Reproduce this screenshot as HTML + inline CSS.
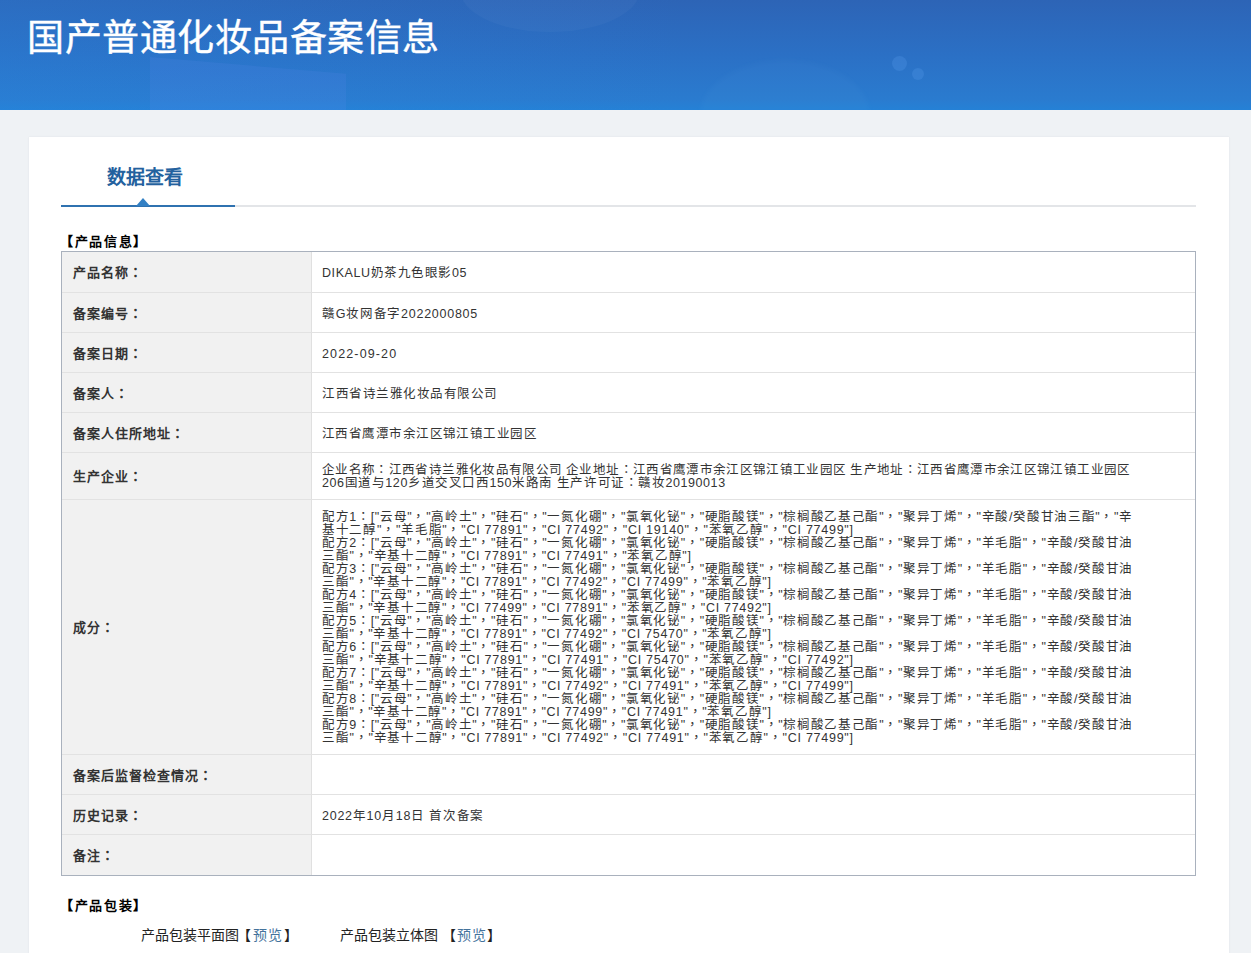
<!DOCTYPE html><html lang="zh-CN"><head><meta charset="utf-8"><style>
*{box-sizing:border-box}
html,body{margin:0;padding:0}
body{width:1251px;height:953px;overflow:hidden;background:#eff2f5;font-family:"Liberation Sans",sans-serif;color:#333;position:relative}
div{position:absolute;white-space:nowrap}
.hdr{left:0;top:0;width:1251px;height:110px;background:linear-gradient(180deg,#2d64b6 0%,#2b70c5 50%,#2a7bcf 90%,#2581d6 100%);overflow:hidden}
.t{color:#fff;font-size:37px;line-height:44px;-webkit-text-stroke:0.4px #fff}
.card{left:29px;top:137px;width:1200px;height:830px;background:#fff;box-shadow:0 0 2px rgba(0,20,60,0.07)}
.tab{font-size:19px;line-height:26px;font-weight:bold;color:#23619e}
.sec{font-size:13px;letter-spacing:1.7px;line-height:16px;font-weight:bold;color:#000}
.box{left:61px;top:251px;width:1135px;height:625px;border:1px solid #a9b1bd;background:#fff}
.lab{left:62px;width:249px;background:#f1f1f1}
.vl{left:311px;top:252px;width:1px;height:623px;background:#e0e0e0}
.hl{left:62px;width:1133px;height:1px;background:#e2e2e2}
.lt{left:73px;font-size:13px;font-weight:bold;color:#333;line-height:20px}
.vt{left:322px;font-size:12.5px;color:#333;line-height:20px}
.il{left:322px;font-size:12.5px;color:#333;line-height:13px}
.pk{font-size:14px;line-height:16px;color:#222}
.pk span{color:#44739c}
</style></head><body>
<div class="hdr"><div style="left:0;top:0;width:1251px;height:110px;background:linear-gradient(90deg,rgba(40,135,225,0.25),rgba(40,135,225,0) 55%)"></div><div style="left:150px;top:57px;width:196px;height:60px;background:rgba(130,150,255,0.1);clip-path:polygon(0 0,100% 28%,100% 100%,0 100%)"></div><div style="left:460px;top:-52px;width:180px;height:84px;border-radius:50%;background:rgba(255,255,255,0.03)"></div><div style="left:700px;top:60px;width:170px;height:110px;border-radius:50%;background:rgba(120,200,255,0.04);filter:blur(2px)"></div><div style="left:892px;top:56px;width:15px;height:15px;border-radius:50%;background:rgba(90,160,240,0.25);filter:blur(0.6px)"></div><div style="left:912px;top:68px;width:12px;height:12px;border-radius:50%;background:rgba(90,160,240,0.25);filter:blur(0.6px)"></div><div class="t" style="left:27px;top:17px;letter-spacing:0.5px">国产普通化妆品备案信息</div></div>
<div class="card"></div>
<div class="tab" style="left:107px;top:165px;letter-spacing:0px">数据查看</div>
<div style="left:61px;top:205px;width:1135px;height:2px;background:#e3e5e8"></div>
<div style="left:61px;top:205px;width:174px;height:2px;background:#2f72b0"></div>
<div style="left:136px;top:198px;width:0;height:0;border-left:7px solid transparent;border-right:7px solid transparent;border-bottom:8px solid #3380c4"></div>
<div class="sec" style="left:60px;top:234px">【产品信息】</div>
<div class="box"></div>
<div class="lab" style="top:252px;height:40px"></div>
<div class="lab" style="top:293px;height:39px"></div>
<div class="lab" style="top:333px;height:39px"></div>
<div class="lab" style="top:373px;height:39px"></div>
<div class="lab" style="top:413px;height:39px"></div>
<div class="lab" style="top:453px;height:46px"></div>
<div class="lab" style="top:500px;height:254px"></div>
<div class="lab" style="top:755px;height:39px"></div>
<div class="lab" style="top:795px;height:39px"></div>
<div class="lab" style="top:835px;height:40px"></div>
<div class="vl"></div>
<div class="hl" style="top:292px"></div>
<div class="hl" style="top:332px"></div>
<div class="hl" style="top:372px"></div>
<div class="hl" style="top:412px"></div>
<div class="hl" style="top:452px"></div>
<div class="hl" style="top:499px"></div>
<div class="hl" style="top:754px"></div>
<div class="hl" style="top:794px"></div>
<div class="hl" style="top:834px"></div>
<div id="lab0" class="lt" style="top:263.0px;letter-spacing:1px">产品名称<span lang="zh-TW">：</span></div>
<div id="v0" class="vt" style="top:263.0px;letter-spacing:0.569px">DIKALU奶茶九色眼影05</div>
<div id="lab1" class="lt" style="top:303.5px;letter-spacing:1px">备案编号<span lang="zh-TW">：</span></div>
<div id="v1" class="vt" style="top:303.5px;letter-spacing:0.733px">赣G妆网备字2022000805</div>
<div id="lab2" class="lt" style="top:343.5px;letter-spacing:1px">备案日期<span lang="zh-TW">：</span></div>
<div id="v2" class="vt" style="top:343.5px;letter-spacing:1.134px">2022-09-20</div>
<div id="lab3" class="lt" style="top:383.5px;letter-spacing:1px">备案人<span lang="zh-TW">：</span></div>
<div id="v3" class="vt" style="top:383.5px;letter-spacing:0.508px">江西省诗兰雅化妆品有限公司</div>
<div id="lab4" class="lt" style="top:423.5px;letter-spacing:1px">备案人住所地址<span lang="zh-TW">：</span></div>
<div id="v4" class="vt" style="top:423.5px;letter-spacing:0.447px">江西省鹰潭市余江区锦江镇工业园区</div>
<div id="lab5" class="lt" style="top:467.0px;letter-spacing:1px">生产企业<span lang="zh-TW">：</span></div>
<div id="p0" class="il" style="top:464px;letter-spacing:0.348px">企业名称<span lang="zh-TW">：</span>江西省诗兰雅化妆品有限公司 企业地址<span lang="zh-TW">：</span>江西省鹰潭市余江区锦江镇工业园区 生产地址<span lang="zh-TW">：</span>江西省鹰潭市余江区锦江镇工业园区</div>
<div id="p1" class="il" style="top:477px;letter-spacing:0.579px">206国道与120乡道交叉口西150米路南 生产许可证<span lang="zh-TW">：</span>赣妆20190013</div>
<div id="lab6" class="lt" style="top:618.0px;letter-spacing:1px">成分<span lang="zh-TW">：</span></div>
<div id="lab7" class="lt" style="top:765.5px;letter-spacing:1px">备案后监督检查情况<span lang="zh-TW">：</span></div>
<div id="lab8" class="lt" style="top:805.5px;letter-spacing:1px">历史记录<span lang="zh-TW">：</span></div>
<div id="v8" class="vt" style="top:805.5px;letter-spacing:0.747px">2022年10月18日 首次备案</div>
<div id="lab9" class="lt" style="top:846.0px;letter-spacing:1px">备注<span lang="zh-TW">：</span></div>
<div id="i0_0" class="il" style="top:511px;letter-spacing:0.678px">配方1<span lang="zh-TW">：</span>["云母"<span lang="zh-TW">，</span>"高岭土"<span lang="zh-TW">，</span>"硅石"<span lang="zh-TW">，</span>"一氮化硼"<span lang="zh-TW">，</span>"氯氧化铋"<span lang="zh-TW">，</span>"硬脂酸镁"<span lang="zh-TW">，</span>"棕榈酸乙基己酯"<span lang="zh-TW">，</span>"聚异丁烯"<span lang="zh-TW">，</span>"辛酸/癸酸甘油三酯"<span lang="zh-TW">，</span>"辛</div>
<div id="i0_1" class="il" style="top:524px;letter-spacing:0.738px">基十二醇"<span lang="zh-TW">，</span>"羊毛脂"<span lang="zh-TW">，</span>"CI 77891"<span lang="zh-TW">，</span>"CI 77492"<span lang="zh-TW">，</span>"CI 19140"<span lang="zh-TW">，</span>"苯氧乙醇"<span lang="zh-TW">，</span>"CI 77499"]</div>
<div id="i1_0" class="il" style="top:537px;letter-spacing:0.678px">配方2<span lang="zh-TW">：</span>["云母"<span lang="zh-TW">，</span>"高岭土"<span lang="zh-TW">，</span>"硅石"<span lang="zh-TW">，</span>"一氮化硼"<span lang="zh-TW">，</span>"氯氧化铋"<span lang="zh-TW">，</span>"硬脂酸镁"<span lang="zh-TW">，</span>"棕榈酸乙基己酯"<span lang="zh-TW">，</span>"聚异丁烯"<span lang="zh-TW">，</span>"羊毛脂"<span lang="zh-TW">，</span>"辛酸/癸酸甘油</div>
<div id="i1_1" class="il" style="top:550px;letter-spacing:0.725px">三酯"<span lang="zh-TW">，</span>"辛基十二醇"<span lang="zh-TW">，</span>"CI 77891"<span lang="zh-TW">，</span>"CI 77491"<span lang="zh-TW">，</span>"苯氧乙醇"]</div>
<div id="i2_0" class="il" style="top:563px;letter-spacing:0.678px">配方3<span lang="zh-TW">：</span>["云母"<span lang="zh-TW">，</span>"高岭土"<span lang="zh-TW">，</span>"硅石"<span lang="zh-TW">，</span>"一氮化硼"<span lang="zh-TW">，</span>"氯氧化铋"<span lang="zh-TW">，</span>"硬脂酸镁"<span lang="zh-TW">，</span>"棕榈酸乙基己酯"<span lang="zh-TW">，</span>"聚异丁烯"<span lang="zh-TW">，</span>"羊毛脂"<span lang="zh-TW">，</span>"辛酸/癸酸甘油</div>
<div id="i2_1" class="il" style="top:576px;letter-spacing:0.714px">三酯"<span lang="zh-TW">，</span>"辛基十二醇"<span lang="zh-TW">，</span>"CI 77891"<span lang="zh-TW">，</span>"CI 77492"<span lang="zh-TW">，</span>"CI 77499"<span lang="zh-TW">，</span>"苯氧乙醇"]</div>
<div id="i3_0" class="il" style="top:589px;letter-spacing:0.678px">配方4<span lang="zh-TW">：</span>["云母"<span lang="zh-TW">，</span>"高岭土"<span lang="zh-TW">，</span>"硅石"<span lang="zh-TW">，</span>"一氮化硼"<span lang="zh-TW">，</span>"氯氧化铋"<span lang="zh-TW">，</span>"硬脂酸镁"<span lang="zh-TW">，</span>"棕榈酸乙基己酯"<span lang="zh-TW">，</span>"聚异丁烯"<span lang="zh-TW">，</span>"羊毛脂"<span lang="zh-TW">，</span>"辛酸/癸酸甘油</div>
<div id="i3_1" class="il" style="top:602px;letter-spacing:0.714px">三酯"<span lang="zh-TW">，</span>"辛基十二醇"<span lang="zh-TW">，</span>"CI 77499"<span lang="zh-TW">，</span>"CI 77891"<span lang="zh-TW">，</span>"苯氧乙醇"<span lang="zh-TW">，</span>"CI 77492"]</div>
<div id="i4_0" class="il" style="top:615px;letter-spacing:0.678px">配方5<span lang="zh-TW">：</span>["云母"<span lang="zh-TW">，</span>"高岭土"<span lang="zh-TW">，</span>"硅石"<span lang="zh-TW">，</span>"一氮化硼"<span lang="zh-TW">，</span>"氯氧化铋"<span lang="zh-TW">，</span>"硬脂酸镁"<span lang="zh-TW">，</span>"棕榈酸乙基己酯"<span lang="zh-TW">，</span>"聚异丁烯"<span lang="zh-TW">，</span>"羊毛脂"<span lang="zh-TW">，</span>"辛酸/癸酸甘油</div>
<div id="i4_1" class="il" style="top:628px;letter-spacing:0.714px">三酯"<span lang="zh-TW">，</span>"辛基十二醇"<span lang="zh-TW">，</span>"CI 77891"<span lang="zh-TW">，</span>"CI 77492"<span lang="zh-TW">，</span>"CI 75470"<span lang="zh-TW">，</span>"苯氧乙醇"]</div>
<div id="i5_0" class="il" style="top:641px;letter-spacing:0.678px">配方6<span lang="zh-TW">：</span>["云母"<span lang="zh-TW">，</span>"高岭土"<span lang="zh-TW">，</span>"硅石"<span lang="zh-TW">，</span>"一氮化硼"<span lang="zh-TW">，</span>"氯氧化铋"<span lang="zh-TW">，</span>"硬脂酸镁"<span lang="zh-TW">，</span>"棕榈酸乙基己酯"<span lang="zh-TW">，</span>"聚异丁烯"<span lang="zh-TW">，</span>"羊毛脂"<span lang="zh-TW">，</span>"辛酸/癸酸甘油</div>
<div id="i5_1" class="il" style="top:654px;letter-spacing:0.738px">三酯"<span lang="zh-TW">，</span>"辛基十二醇"<span lang="zh-TW">，</span>"CI 77891"<span lang="zh-TW">，</span>"CI 77491"<span lang="zh-TW">，</span>"CI 75470"<span lang="zh-TW">，</span>"苯氧乙醇"<span lang="zh-TW">，</span>"CI 77492"]</div>
<div id="i6_0" class="il" style="top:667px;letter-spacing:0.678px">配方7<span lang="zh-TW">：</span>["云母"<span lang="zh-TW">，</span>"高岭土"<span lang="zh-TW">，</span>"硅石"<span lang="zh-TW">，</span>"一氮化硼"<span lang="zh-TW">，</span>"氯氧化铋"<span lang="zh-TW">，</span>"硬脂酸镁"<span lang="zh-TW">，</span>"棕榈酸乙基己酯"<span lang="zh-TW">，</span>"聚异丁烯"<span lang="zh-TW">，</span>"羊毛脂"<span lang="zh-TW">，</span>"辛酸/癸酸甘油</div>
<div id="i6_1" class="il" style="top:680px;letter-spacing:0.738px">三酯"<span lang="zh-TW">，</span>"辛基十二醇"<span lang="zh-TW">，</span>"CI 77891"<span lang="zh-TW">，</span>"CI 77492"<span lang="zh-TW">，</span>"CI 77491"<span lang="zh-TW">，</span>"苯氧乙醇"<span lang="zh-TW">，</span>"CI 77499"]</div>
<div id="i7_0" class="il" style="top:693px;letter-spacing:0.678px">配方8<span lang="zh-TW">：</span>["云母"<span lang="zh-TW">，</span>"高岭土"<span lang="zh-TW">，</span>"硅石"<span lang="zh-TW">，</span>"一氮化硼"<span lang="zh-TW">，</span>"氯氧化铋"<span lang="zh-TW">，</span>"硬脂酸镁"<span lang="zh-TW">，</span>"棕榈酸乙基己酯"<span lang="zh-TW">，</span>"聚异丁烯"<span lang="zh-TW">，</span>"羊毛脂"<span lang="zh-TW">，</span>"辛酸/癸酸甘油</div>
<div id="i7_1" class="il" style="top:706px;letter-spacing:0.714px">三酯"<span lang="zh-TW">，</span>"辛基十二醇"<span lang="zh-TW">，</span>"CI 77891"<span lang="zh-TW">，</span>"CI 77499"<span lang="zh-TW">，</span>"CI 77491"<span lang="zh-TW">，</span>"苯氧乙醇"]</div>
<div id="i8_0" class="il" style="top:719px;letter-spacing:0.678px">配方9<span lang="zh-TW">：</span>["云母"<span lang="zh-TW">，</span>"高岭土"<span lang="zh-TW">，</span>"硅石"<span lang="zh-TW">，</span>"一氮化硼"<span lang="zh-TW">，</span>"氯氧化铋"<span lang="zh-TW">，</span>"硬脂酸镁"<span lang="zh-TW">，</span>"棕榈酸乙基己酯"<span lang="zh-TW">，</span>"聚异丁烯"<span lang="zh-TW">，</span>"羊毛脂"<span lang="zh-TW">，</span>"辛酸/癸酸甘油</div>
<div id="i8_1" class="il" style="top:732px;letter-spacing:0.738px">三酯"<span lang="zh-TW">，</span>"辛基十二醇"<span lang="zh-TW">，</span>"CI 77891"<span lang="zh-TW">，</span>"CI 77492"<span lang="zh-TW">，</span>"CI 77491"<span lang="zh-TW">，</span>"苯氧乙醇"<span lang="zh-TW">，</span>"CI 77499"]</div>
<div class="sec" style="left:60px;top:898px">【产品包装】</div>
<div id="pk0" class="pk" style="left:141px;top:927px">产品包装平面图</div>
<div id="pk0b" class="pk" style="left:237px;top:927px;letter-spacing:1.6px">【<span>预览</span>】</div>
<div id="pk1" class="pk" style="left:340px;top:927px">产品包装立体图</div>
<div id="pk1b" class="pk" style="left:442px;top:927px;letter-spacing:1.0px">【<span>预览</span>】</div>
</body></html>
